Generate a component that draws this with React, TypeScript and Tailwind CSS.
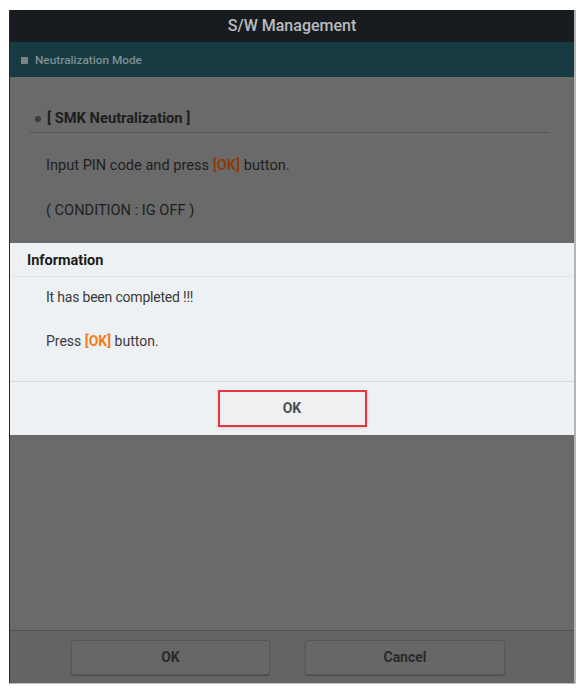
const font = { fontFamily: 'Roboto, "Noto Sans", Arial, sans-serif' }

function Ok() {
  return <span className="font-bold text-[#f47b20]">[OK]</span>
}

function Dialog() {
  return (
    <div className="absolute left-0 right-0 top-[233px] h-[192px] flex flex-col bg-[#eef1f3]">
      <div className="flex h-[34px] items-center border-b border-[#e2e5e8] px-[17px] pt-[3px] text-[14.5px] font-bold text-[#1c1c1c]">
        Information
      </div>
      <div className="flex flex-1 flex-col pl-[36px] pt-[10px] text-[14px] text-[#3a3a3a]">
        <p className="leading-[20px] tracking-[-0.2px]">It has been completed !!!</p>
        <p className="mt-[24px] leading-[20px]">
          Press <Ok /> button.
        </p>
      </div>
      <div className="flex h-[54px] items-center justify-center border-t border-[#d6d9dc]">
        <button className="h-[37px] w-[149px] border-2 border-[#e8343b] bg-[#eef0f2] text-[14px] font-bold text-[#4a4f55] shadow-sm">
          OK
        </button>
      </div>
    </div>
  )
}

export default function App() {
  return (
    <div className="h-[693px] w-[585px] bg-white pl-[9px] pt-[10px]" style={font}>
      <div className="relative flex h-[673px] w-[567px] flex-col border-l border-r-2 border-l-[#2a2a2a] border-r-[#b5b5b5] shadow-[0_1px_0_#bdbdbd]">
        <div className="flex h-[32px] items-center justify-center bg-[#181b1f] text-[16px] font-medium text-[#b9bcbf]">
          S/W Management
        </div>
        <div className="flex h-[35px] items-center gap-[7px] bg-[#173b43] pl-[11px] pt-[2px] text-[11.8px] font-medium text-[#7f8f92]">
          <span className="h-[7px] w-[7px] bg-[#7b8587]" />
          Neutralization Mode
        </div>
        <div className="flex-1 bg-[#6a6a6a] pl-[20px] pr-[24px] pt-[31px]">
          <div className="flex h-[25px] items-start gap-[6px] border-b border-[#4f5a5c] pl-[5px] text-[14.7px] font-bold leading-[20px] text-[#1d1d1d]">
            <span className="mt-[8px] h-[6px] w-[6px] rounded-full bg-[#3c3c3c]" />
            [ SMK Neutralization ]
          </div>
          <div className="pl-[16px] pt-[22px] text-[14.6px] leading-[20px] text-[#1f1f1f]">
            <p>
              Input PIN code and press <span className="font-bold text-[#8a3d0c]">[OK]</span> button.
            </p>
            <p className="mt-[25px]">( CONDITION : IG OFF )</p>
          </div>
        </div>
        <div className="flex h-[53px] gap-[35px] border-t border-[#535353] bg-[#636463] pl-[61px] pt-[9px]">
          <button className="h-[35px] w-[199px] rounded-[3px] border border-[#575757] bg-[#666766] text-[14px] font-bold text-[#2a2a2a] shadow-[0_1px_1px_rgba(0,0,0,0.25)]">
            OK
          </button>
          <button className="h-[35px] w-[200px] rounded-[3px] border border-[#575757] bg-[#666766] text-[14px] font-bold text-[#2a2a2a] shadow-[0_1px_1px_rgba(0,0,0,0.25)]">
            Cancel
          </button>
        </div>
        <Dialog />
      </div>
    </div>
  )
}
